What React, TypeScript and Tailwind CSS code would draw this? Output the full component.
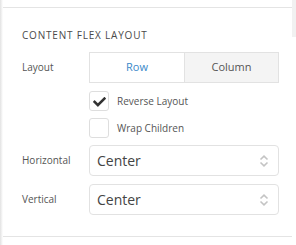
import React from "react";

const font = { fontFamily: '"Open Sans", "Liberation Sans", sans-serif' };

function Check() {
  return (
    <svg width="13" height="11" viewBox="0 0 512 420" className="fill-[#333]">
      <path d="M173.9 410.4L7.5 244c-10-10-10-26.2 0-36.2l36.2-36.2c10-10 26.2-10 36.2 0L192 283.7 432.1 43.6c10-10 26.2-10 36.2 0l36.2 36.2c10 10 10 26.2 0 36.2L210.1 410.4c-10 10-26.2 10-36.2 0z" />
    </svg>
  );
}

function Arrows() {
  return (
    <svg width="10" height="12" viewBox="0 0 10 12" className="stroke-[#c4c4c4]" fill="none" strokeWidth="1.6">
      <path d="M1.5 4.5 L5 1.2 L8.5 4.5" />
      <path d="M1.5 7.5 L5 10.8 L8.5 7.5" />
    </svg>
  );
}

function Select({ value }: { value: string }) {
  return (
    <div className="h-[31px] w-[190px] border border-[#e2e2e2] rounded-[4px] bg-white flex items-center justify-between pl-[7px] pr-[9px]">
      <span className="text-[14px] text-[#444]">{value}</span>
      <Arrows />
    </div>
  );
}

export default function App() {
  return (
    <div className="relative w-[296px] h-[245px] bg-white overflow-hidden" style={font}>
      <div className="absolute left-0 top-0 bottom-0 w-[3px] bg-gradient-to-r from-[#e2e2e2] to-white" />
      <div className="absolute right-0 top-0 w-[4px] h-[37px] bg-[#f1f1f1]" />
      <div className="pt-[7px] pl-[2px] pr-[4px]">
        <div className="border-t border-[#e4e4e4] pl-[20px] pb-[21px] border-b">
          <div className="mt-[20px] h-[14px] leading-[14px] text-[10px] font-medium tracking-[0.8px] text-[#4a4a4a]">
            CONTENT FLEX LAYOUT
          </div>
          <div className="mt-[10px] flex items-center">
            <div className="w-[67px] text-[10px] text-[#555]">Layout</div>
            <div className="flex h-[31px] w-[190px] border border-[#e2e2e2]">
              <div className="w-[95px] flex items-center justify-center text-[11px] text-[#3b89c9] bg-white border-r border-[#e2e2e2]">Row</div>
              <div className="flex-1 flex items-center justify-center text-[11px] text-[#555] bg-[#f4f4f4]">Column</div>
            </div>
          </div>
          <div className="mt-[8px] ml-[67px] flex items-center">
            <div className="w-[20px] h-[20px] border border-[#dedede] rounded-[3px] flex items-center justify-center">
              <Check />
            </div>
            <span className="ml-[8px] text-[10px] text-[#555]">Reverse Layout</span>
          </div>
          <div className="mt-[7px] ml-[67px] flex items-center">
            <div className="w-[20px] h-[20px] border border-[#dedede] rounded-[3px]" />
            <span className="ml-[8px] text-[10px] text-[#555]">Wrap Children</span>
          </div>
          <div className="mt-[7px] flex items-center">
            <div className="w-[67px] text-[10px] text-[#555]">Horizontal</div>
            <Select value="Center" />
          </div>
          <div className="mt-[8px] flex items-center">
            <div className="w-[67px] text-[10px] text-[#555]">Vertical</div>
            <Select value="Center" />
          </div>
        </div>
      </div>
    </div>
  );
}
